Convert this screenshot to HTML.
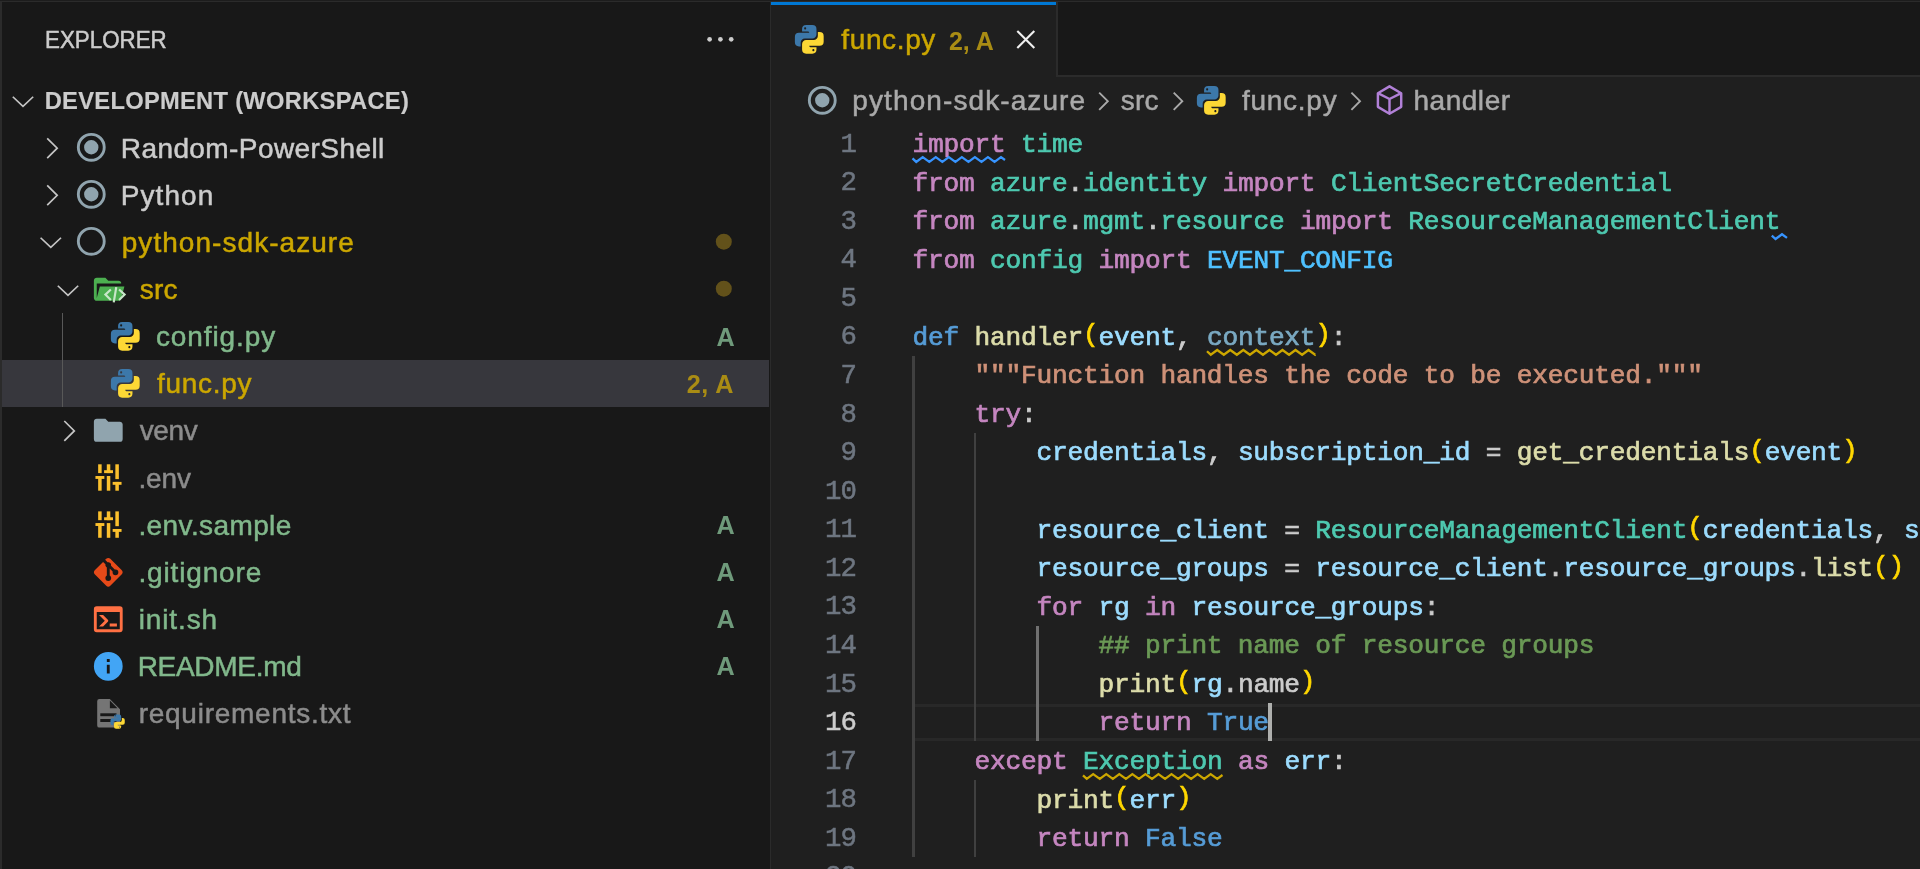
<!DOCTYPE html>
<html><head><meta charset="utf-8"><title>func.py - Visual Studio Code</title><style>
html,body{margin:0;padding:0;background:#181818;}
body{width:1920px;height:869px;overflow:hidden;position:relative;}
#r{position:absolute;left:0;top:0;width:1920px;height:869px;overflow:hidden;will-change:transform;transform:translateZ(0);}
#r>div,#r>span,#r>svg{position:absolute;display:block;}
#r>span{white-space:pre;}
#r>svg{overflow:visible;}
.s{font-family:"Liberation Sans", sans-serif;line-height:40px;-webkit-text-stroke:0.5px;}
.m{font:26.2px/38.56px "Liberation Mono", monospace;letter-spacing:-0.2226px;-webkit-text-stroke:0.7px;}
.m.n{font-size:27.4px;letter-spacing:-0.9427px;-webkit-text-stroke:0.5px;}
.m i{font-style:normal;}
.m .b{color:#ffd700;position:relative;top:-2.6px;}
</style></head>
<body><div id="r">
<div style="left:0.00px;top:0.00px;width:1920.00px;height:869.00px;background:#181818;"></div>
<div style="left:771.00px;top:77.00px;width:1149.00px;height:792.00px;background:#1f1f1f;"></div>
<div style="left:0.00px;top:0.00px;width:1920.00px;height:1.00px;background:#1d1d1d;"></div>
<div style="left:0.00px;top:1.00px;width:1920.00px;height:1.00px;background:#2b2b2b;"></div>
<div style="left:0.00px;top:1.00px;width:2.00px;height:868.00px;background:#2b2b2b;"></div>
<div style="left:770.00px;top:2.00px;width:1.00px;height:867.00px;background:#2b2b2b;"></div>
<div style="left:771.00px;top:75.00px;width:1149.00px;height:2.00px;background:#2b2b2b;"></div>
<div style="left:771.00px;top:2.00px;width:285.00px;height:75.00px;background:#1f1f1f;"></div>
<div style="left:771.00px;top:2.00px;width:285.00px;height:2.50px;background:#0078d4;"></div>
<div style="left:1056.00px;top:2.00px;width:1.50px;height:74.00px;background:#2b2b2b;"></div>
<div style="left:2.00px;top:359.72px;width:767.00px;height:47.08px;background:#37373d;"></div>
<svg style="left:710px;top:229px" width="28" height="24" viewBox="710 229 28 24"><circle cx="723.8" cy="241.7" r="8" fill="#62511a"/></svg>
<svg style="left:710px;top:276px" width="28" height="24" viewBox="710 276 28 24"><circle cx="723.8" cy="288.7" r="8" fill="#62511a"/></svg>
<div style="left:62.00px;top:312.50px;width:1.00px;height:94.40px;background:#585858;"></div>
<span class="s" style="transform:scaleX(0.9432);transform-origin:0 0;left:44.91px;top:20.38px;font-size:23.7px;font-weight:normal;letter-spacing:0.000px;-webkit-text-stroke-width:0.5px;color:#cccccc">EXPLORER</span>
<span class="s" style="left:44.68px;top:81.18px;font-size:23.7px;font-weight:bold;letter-spacing:0.301px;-webkit-text-stroke-width:0.15px;color:#cccccc">DEVELOPMENT (WORKSPACE)</span>
<span class="s" style="left:120.75px;top:128.94px;font-size:28.0px;font-weight:normal;letter-spacing:0.421px;-webkit-text-stroke-width:0.5px;color:#cccccc">Random-PowerShell</span>
<span class="s" style="left:120.75px;top:176.03px;font-size:28.0px;font-weight:normal;letter-spacing:1.080px;-webkit-text-stroke-width:0.5px;color:#cccccc">Python</span>
<span class="s" style="left:121.75px;top:223.11px;font-size:28.0px;font-weight:normal;letter-spacing:1.049px;-webkit-text-stroke-width:0.5px;color:#cca700">python-sdk-azure</span>
<span class="s" style="left:139.85px;top:270.19px;font-size:28.0px;font-weight:normal;letter-spacing:0.138px;-webkit-text-stroke-width:0.5px;color:#cca700">src</span>
<span class="s" style="left:155.95px;top:317.28px;font-size:28.0px;font-weight:normal;letter-spacing:0.891px;-webkit-text-stroke-width:0.5px;color:#81b88b">config.py</span>
<span class="s" style="left:156.95px;top:364.36px;font-size:28.0px;font-weight:normal;letter-spacing:0.704px;-webkit-text-stroke-width:0.5px;color:#cca700">func.py</span>
<span class="s" style="left:139.75px;top:411.45px;font-size:28.0px;font-weight:normal;letter-spacing:-0.415px;-webkit-text-stroke-width:0.5px;color:#8c8c8c">venv</span>
<span class="s" style="left:138.45px;top:458.53px;font-size:28.0px;font-weight:normal;letter-spacing:-0.108px;-webkit-text-stroke-width:0.5px;color:#8c8c8c">.env</span>
<span class="s" style="left:138.45px;top:505.61px;font-size:28.0px;font-weight:normal;letter-spacing:0.399px;-webkit-text-stroke-width:0.5px;color:#81b88b">.env.sample</span>
<span class="s" style="left:138.45px;top:552.70px;font-size:28.0px;font-weight:normal;letter-spacing:0.843px;-webkit-text-stroke-width:0.5px;color:#81b88b">.gitignore</span>
<span class="s" style="left:138.65px;top:599.78px;font-size:28.0px;font-weight:normal;letter-spacing:0.888px;-webkit-text-stroke-width:0.5px;color:#81b88b">init.sh</span>
<span class="s" style="left:137.65px;top:646.87px;font-size:28.0px;font-weight:normal;letter-spacing:-0.287px;-webkit-text-stroke-width:0.5px;color:#81b88b">README.md</span>
<span class="s" style="left:138.65px;top:693.95px;font-size:28.0px;font-weight:normal;letter-spacing:0.749px;-webkit-text-stroke-width:0.5px;color:#8c8c8c">requirements.txt</span>
<span class="s" style="left:716.60px;top:316.65px;font-size:25.2px;font-weight:bold;letter-spacing:0.000px;-webkit-text-stroke-width:0px;color:#6f9a7b">A</span>
<span class="s" style="left:716.60px;top:504.99px;font-size:25.2px;font-weight:bold;letter-spacing:0.000px;-webkit-text-stroke-width:0px;color:#6f9a7b">A</span>
<span class="s" style="left:716.60px;top:552.07px;font-size:25.2px;font-weight:bold;letter-spacing:0.000px;-webkit-text-stroke-width:0px;color:#6f9a7b">A</span>
<span class="s" style="left:716.60px;top:599.15px;font-size:25.2px;font-weight:bold;letter-spacing:0.000px;-webkit-text-stroke-width:0px;color:#6f9a7b">A</span>
<span class="s" style="left:716.60px;top:646.24px;font-size:25.2px;font-weight:bold;letter-spacing:0.000px;-webkit-text-stroke-width:0px;color:#6f9a7b">A</span>
<span class="s" style="left:686.70px;top:363.73px;font-size:25.2px;font-weight:bold;letter-spacing:0.499px;-webkit-text-stroke-width:0px;color:#a98c14">2, A</span>
<span class="s" style="left:841.25px;top:20.19px;font-size:28.0px;font-weight:normal;letter-spacing:0.637px;-webkit-text-stroke-width:0.5px;color:#cca700">func.py</span>
<span class="s" style="transform:scaleX(0.9591);transform-origin:0 0;left:948.75px;top:20.99px;font-size:26.0px;font-weight:bold;letter-spacing:0.000px;-webkit-text-stroke-width:0px;color:#a98c14">2, A</span>
<span class="s" style="left:852.35px;top:80.89px;font-size:28.0px;font-weight:normal;letter-spacing:1.096px;-webkit-text-stroke-width:0.5px;color:#a9a9a9">python-sdk-azure</span>
<span class="s" style="left:1120.85px;top:80.89px;font-size:28.0px;font-weight:normal;letter-spacing:0.163px;-webkit-text-stroke-width:0.5px;color:#a9a9a9">src</span>
<span class="s" style="left:1241.95px;top:80.89px;font-size:28.0px;font-weight:normal;letter-spacing:0.737px;-webkit-text-stroke-width:0.5px;color:#a9a9a9">func.py</span>
<span class="s" style="left:1413.45px;top:80.89px;font-size:28.0px;font-weight:normal;letter-spacing:0.536px;-webkit-text-stroke-width:0.5px;color:#a9a9a9">handler</span>
<svg style="left:7px;top:85px" width="32" height="32" viewBox="7 85 32 32"><path d="M12.80 96.75L23.00 106.45L33.20 96.75" fill="none" stroke="#c5c5c5" stroke-width="1.7" stroke-linejoin="miter"/></svg>
<svg style="left:700px;top:30px" width="40" height="20" viewBox="700 30 40 20"><circle cx="709.6" cy="39.35" r="2.35" fill="#cccccc"/><circle cx="720.4" cy="39.35" r="2.35" fill="#cccccc"/><circle cx="731.2" cy="39.35" r="2.35" fill="#cccccc"/></svg>
<svg style="left:36px;top:132px" width="32" height="32" viewBox="36 132 32 32"><path d="M47.20 138.30L57.20 148.20L47.20 158.10" fill="none" stroke="#c5c5c5" stroke-width="1.7" stroke-linejoin="miter"/></svg>
<svg style="left:36px;top:179px" width="32" height="32" viewBox="36 179 32 32"><path d="M47.20 185.38L57.20 195.28L47.20 205.18" fill="none" stroke="#c5c5c5" stroke-width="1.7" stroke-linejoin="miter"/></svg>
<svg style="left:34px;top:226px" width="32" height="32" viewBox="34 226 32 32"><path d="M40.60 237.75L50.80 247.45L61.00 237.75" fill="none" stroke="#c5c5c5" stroke-width="1.7" stroke-linejoin="miter"/></svg>
<svg style="left:52px;top:274px" width="32" height="32" viewBox="52 274 32 32"><path d="M57.80 285.75L68.00 295.45L78.20 285.75" fill="none" stroke="#c5c5c5" stroke-width="1.7" stroke-linejoin="miter"/></svg>
<svg style="left:53px;top:414px" width="32" height="32" viewBox="53 414 32 32"><path d="M64.30 421.00L74.30 430.90L64.30 440.80" fill="none" stroke="#c5c5c5" stroke-width="1.7" stroke-linejoin="miter"/></svg>
<svg style="left:74.12px;top:130.11px" width="34.56" height="34.56" viewBox="0 0 24 24"><path fill="#90a4ae" d="M12 2A10 10 0 0 0 2 12a10 10 0 0 0 10 10 10 10 0 0 0 10-10A10 10 0 0 0 12 2m0 2a8 8 0 0 1 8 8 8 8 0 0 1-8 8 8 8 0 0 1-8-8 8 8 0 0 1 8-8m0 3a5 5 0 0 0-5 5 5 5 0 0 0 5 5 5 5 0 0 0 5-5 5 5 0 0 0-5-5z"/></svg>
<svg style="left:74.12px;top:177.40px" width="34.56" height="34.56" viewBox="0 0 24 24"><path fill="#90a4ae" d="M12 2A10 10 0 0 0 2 12a10 10 0 0 0 10 10 10 10 0 0 0 10-10A10 10 0 0 0 12 2m0 2a8 8 0 0 1 8 8 8 8 0 0 1-8 8 8 8 0 0 1-8-8 8 8 0 0 1 8-8m0 3a5 5 0 0 0-5 5 5 5 0 0 0 5 5 5 5 0 0 0 5-5 5 5 0 0 0-5-5z"/></svg>
<svg style="left:74.12px;top:224.28px" width="34.56" height="34.56" viewBox="0 0 24 24"><path fill="#90a4ae" d="M12 2A10 10 0 0 0 2 12a10 10 0 0 0 10 10 10 10 0 0 0 10-10A10 10 0 0 0 12 2m0 2a8 8 0 0 1 8 8 8 8 0 0 1-8 8 8 8 0 0 1-8-8 8 8 0 0 1 8-8z"/></svg>
<svg style="left:91.22px;top:272.14px" width="34.56" height="34.56" viewBox="0 0 24 24"><path fill="#4caf50" d="M19 20H4c-1.11 0-2-.9-2-2V6c0-1.11.89-2 2-2h6l2 2h7a2 2 0 0 1 2 2H4v10l2.14-8h17.07l-2.28 8.5c-.23.87-1.01 1.5-1.93 1.5z"/><g fill="none" stroke="#c8e6c9" stroke-width="1.5" stroke-linejoin="miter"><path d="M13.8 12.2L10.0 15.7L13.8 19.45"/><path d="M17.55 10.5L15.8 21.1"/><path d="M19.5 12.2L23.35 15.7L19.5 19.45"/></g></svg>
<svg style="left:108.32px;top:319.02px" width="34.56" height="34.56" viewBox="0 0 24 24"><path fill="#3c78aa" d="M9.86 2A2.86 2.86 0 0 0 7 4.86v1.68h4.29c.39 0 .71.57.71.96H4.86A2.86 2.86 0 0 0 2 10.36v3.78A2.86 2.86 0 0 0 4.86 17h1.18v-2.68a2.85 2.85 0 0 1 2.85-2.86h5.25A2.85 2.85 0 0 0 17 8.61V4.86A2.86 2.86 0 0 0 14.14 2zm-.72 1.61c.4 0 .72.12.72.71s-.32.89-.72.89c-.39 0-.71-.3-.71-.89s.32-.71.71-.71z"/><path fill="#fdd835" d="M17.96 7v2.68a2.85 2.85 0 0 1-2.85 2.86H9.86A2.85 2.85 0 0 0 7 15.39v3.75A2.86 2.86 0 0 0 9.86 22h4.28A2.86 2.86 0 0 0 17 19.14v-1.68h-4.29c-.39 0-.71-.57-.71-.96h7.14A2.86 2.86 0 0 0 22 13.64V9.86A2.86 2.86 0 0 0 19.14 7zm-3.1 11.79c.39 0 .71.3.71.89a.71.71 0 0 1-.71.71c-.4 0-.72-.12-.72-.71s.32-.89.72-.89z"/></svg>
<svg style="left:108.32px;top:366.10px" width="34.56" height="34.56" viewBox="0 0 24 24"><path fill="#3c78aa" d="M9.86 2A2.86 2.86 0 0 0 7 4.86v1.68h4.29c.39 0 .71.57.71.96H4.86A2.86 2.86 0 0 0 2 10.36v3.78A2.86 2.86 0 0 0 4.86 17h1.18v-2.68a2.85 2.85 0 0 1 2.85-2.86h5.25A2.85 2.85 0 0 0 17 8.61V4.86A2.86 2.86 0 0 0 14.14 2zm-.72 1.61c.4 0 .72.12.72.71s-.32.89-.72.89c-.39 0-.71-.3-.71-.89s.32-.71.71-.71z"/><path fill="#fdd835" d="M17.96 7v2.68a2.85 2.85 0 0 1-2.85 2.86H9.86A2.85 2.85 0 0 0 7 15.39v3.75A2.86 2.86 0 0 0 9.86 22h4.28A2.86 2.86 0 0 0 17 19.14v-1.68h-4.29c-.39 0-.71-.57-.71-.96h7.14A2.86 2.86 0 0 0 22 13.64V9.86A2.86 2.86 0 0 0 19.14 7zm-3.1 11.79c.39 0 .71.3.71.89a.71.71 0 0 1-.71.71c-.4 0-.72-.12-.72-.71s.32-.89.72-.89z"/></svg>
<svg style="left:91.27px;top:413.44px" width="34.56" height="34.56" viewBox="0 0 24 24"><path fill="#90a4ae" d="M10 4H4c-1.11 0-2 .89-2 2v12a2 2 0 0 0 2 2h16a2 2 0 0 0 2-2V8c0-1.11-.9-2-2-2h-8l-2-2z"/></svg>
<svg style="left:90px;top:459px" width="36" height="36" viewBox="90 459 36 36"><g fill="#fbc02d"><rect x="98.15" y="464.30" width="3.50" height="8.80"/><rect x="98.15" y="476.00" width="3.50" height="14.70"/><rect x="95.45" y="476.00" width="8.90" height="2.90"/><rect x="106.80" y="464.30" width="3.50" height="8.80"/><rect x="106.80" y="476.00" width="3.50" height="14.70"/><rect x="104.10" y="470.20" width="8.90" height="2.90"/><rect x="115.35" y="464.30" width="3.50" height="14.80"/><rect x="115.35" y="481.90" width="3.50" height="8.80"/><rect x="112.65" y="481.90" width="8.90" height="2.90"/></g></svg>
<svg style="left:90px;top:506px" width="36" height="36" viewBox="90 506 36 36"><g fill="#fbc02d"><rect x="98.15" y="511.38" width="3.50" height="8.80"/><rect x="98.15" y="523.08" width="3.50" height="14.70"/><rect x="95.45" y="523.08" width="8.90" height="2.90"/><rect x="106.80" y="511.38" width="3.50" height="8.80"/><rect x="106.80" y="523.08" width="3.50" height="14.70"/><rect x="104.10" y="517.28" width="8.90" height="2.90"/><rect x="115.35" y="511.38" width="3.50" height="14.80"/><rect x="115.35" y="528.98" width="3.50" height="8.80"/><rect x="112.65" y="528.98" width="8.90" height="2.90"/></g></svg>
<svg style="left:91.42px;top:554.92px" width="34.56" height="34.56" viewBox="0 0 24 24"><path fill="#e64a19" d="M2.6 10.59 8.38 4.8l1.69 1.7c-.24.85.15 1.78.93 2.23v5.54c-.6.34-1 .99-1 1.73a2 2 0 0 0 2 2 2 2 0 0 0 2-2c0-.74-.4-1.39-1-1.73V9.41l2.07 2.09c-.07.15-.07.32-.07.5a2 2 0 0 0 2 2 2 2 0 0 0 2-2 2 2 0 0 0-2-2c-.18 0-.35 0-.5.07L13.93 7.5a1.98 1.98 0 0 0-1.15-2.34c-.43-.16-.88-.2-1.28-.09L9.8 3.38l.79-.78c.78-.79 2.04-.79 2.82 0l7.99 7.99c.79.78.79 2.04 0 2.82l-7.99 7.99c-.78.79-2.04.79-2.82 0L2.6 13.41c-.79-.78-.79-2.04 0-2.82z"/></svg>
<svg style="left:91.42px;top:601.57px" width="34.56" height="34.56" viewBox="0 0 24 24"><path fill="#ff7043" d="M20 19V7H4v12h16m0-16a2 2 0 0 1 2 2v14a2 2 0 0 1-2 2H4a2 2 0 0 1-2-2V5a2 2 0 0 1 2-2h16m-7 14v-2h5v2h-5m-3.42-4L5.57 9H8.4l3.3 3.3c.39.39.39 1.03 0 1.42L8.42 17H5.59l4-4z"/></svg>
<svg style="left:91.42px;top:648.52px" width="34.56" height="34.56" viewBox="0 0 24 24"><path fill="#42a5f5" d="M13 9h-2V7h2m0 10h-2v-6h2m-1-9A10 10 0 0 0 2 12a10 10 0 0 0 10 10 10 10 0 0 0 10-10A10 10 0 0 0 12 2z"/></svg>
<svg style="left:92px;top:695px" width="36" height="38" viewBox="92 695 36 38"><path fill="#757575" d="M99.4 699H109.8L120 709.2V725.4a2.2 2.2 0 0 1-2.2 2.2H99.4a2.2 2.2 0 0 1-2.2-2.2V701.2a2.2 2.2 0 0 1 2.2-2.2z"/><path fill="#181818" d="M109.9 700.6V708.2H117.5z"/><rect x="100.3" y="713.3" width="16.2" height="2.9" fill="#181818"/><rect x="100.3" y="719.0" width="16.2" height="3.0" fill="#181818"/></svg>
<svg style="left:108.55px;top:713.35px" width="17.20" height="17.20" viewBox="0 0 24 24"><path fill="#3c78aa" d="M9.86 2A2.86 2.86 0 0 0 7 4.86v1.68h4.29c.39 0 .71.57.71.96H4.86A2.86 2.86 0 0 0 2 10.36v3.78A2.86 2.86 0 0 0 4.86 17h1.18v-2.68a2.85 2.85 0 0 1 2.85-2.86h5.25A2.85 2.85 0 0 0 17 8.61V4.86A2.86 2.86 0 0 0 14.14 2zm-.72 1.61c.4 0 .72.12.72.71s-.32.89-.72.89c-.39 0-.71-.3-.71-.89s.32-.71.71-.71z"/><path fill="#fdd835" d="M17.96 7v2.68a2.85 2.85 0 0 1-2.85 2.86H9.86A2.85 2.85 0 0 0 7 15.39v3.75A2.86 2.86 0 0 0 9.86 22h4.28A2.86 2.86 0 0 0 17 19.14v-1.68h-4.29c-.39 0-.71-.57-.71-.96h7.14A2.86 2.86 0 0 0 22 13.64V9.86A2.86 2.86 0 0 0 19.14 7zm-3.1 11.79c.39 0 .71.3.71.89a.71.71 0 0 1-.71.71c-.4 0-.72-.12-.72-.71s.32-.89.72-.89z"/></svg>
<svg style="left:792.22px;top:21.82px" width="34.56" height="34.56" viewBox="0 0 24 24"><path fill="#3c78aa" d="M9.86 2A2.86 2.86 0 0 0 7 4.86v1.68h4.29c.39 0 .71.57.71.96H4.86A2.86 2.86 0 0 0 2 10.36v3.78A2.86 2.86 0 0 0 4.86 17h1.18v-2.68a2.85 2.85 0 0 1 2.85-2.86h5.25A2.85 2.85 0 0 0 17 8.61V4.86A2.86 2.86 0 0 0 14.14 2zm-.72 1.61c.4 0 .72.12.72.71s-.32.89-.72.89c-.39 0-.71-.3-.71-.89s.32-.71.71-.71z"/><path fill="#fdd835" d="M17.96 7v2.68a2.85 2.85 0 0 1-2.85 2.86H9.86A2.85 2.85 0 0 0 7 15.39v3.75A2.86 2.86 0 0 0 9.86 22h4.28A2.86 2.86 0 0 0 17 19.14v-1.68h-4.29c-.39 0-.71-.57-.71-.96h7.14A2.86 2.86 0 0 0 22 13.64V9.86A2.86 2.86 0 0 0 19.14 7zm-3.1 11.79c.39 0 .71.3.71.89a.71.71 0 0 1-.71.71c-.4 0-.72-.12-.72-.71s.32-.89.72-.89z"/></svg>
<svg style="left:1010px;top:24px" width="32" height="32" viewBox="1010 24 32 32"><path d="M1017.3 31.0L1034.3 48.0M1034.3 31.0L1017.3 48.0" stroke="#f0f0f0" stroke-width="2.1" fill="none"/></svg>
<svg style="left:805.02px;top:82.92px" width="34.56" height="34.56" viewBox="0 0 24 24"><path fill="#90a4ae" d="M12 2A10 10 0 0 0 2 12a10 10 0 0 0 10 10 10 10 0 0 0 10-10A10 10 0 0 0 12 2m0 2a8 8 0 0 1 8 8 8 8 0 0 1-8 8 8 8 0 0 1-8-8 8 8 0 0 1 8-8m0 3a5 5 0 0 0-5 5 5 5 0 0 0 5 5 5 5 0 0 0 5-5 5 5 0 0 0-5-5z"/></svg>
<svg style="left:1087px;top:85px" width="32" height="32" viewBox="1087 85 32 32"><path d="M1099.20 92.60L1107.80 101.20L1099.20 109.80" fill="none" stroke="#a9a9a9" stroke-width="1.9" stroke-linejoin="miter"/></svg>
<svg style="left:1162px;top:85px" width="32" height="32" viewBox="1162 85 32 32"><path d="M1173.70 92.60L1182.30 101.20L1173.70 109.80" fill="none" stroke="#a9a9a9" stroke-width="1.9" stroke-linejoin="miter"/></svg>
<svg style="left:1339px;top:85px" width="32" height="32" viewBox="1339 85 32 32"><path d="M1351.40 92.60L1360.00 101.20L1351.40 109.80" fill="none" stroke="#a9a9a9" stroke-width="1.9" stroke-linejoin="miter"/></svg>
<svg style="left:1193.52px;top:83.22px" width="34.56" height="34.56" viewBox="0 0 24 24"><path fill="#3c78aa" d="M9.86 2A2.86 2.86 0 0 0 7 4.86v1.68h4.29c.39 0 .71.57.71.96H4.86A2.86 2.86 0 0 0 2 10.36v3.78A2.86 2.86 0 0 0 4.86 17h1.18v-2.68a2.85 2.85 0 0 1 2.85-2.86h5.25A2.85 2.85 0 0 0 17 8.61V4.86A2.86 2.86 0 0 0 14.14 2zm-.72 1.61c.4 0 .72.12.72.71s-.32.89-.72.89c-.39 0-.71-.3-.71-.89s.32-.71.71-.71z"/><path fill="#fdd835" d="M17.96 7v2.68a2.85 2.85 0 0 1-2.85 2.86H9.86A2.85 2.85 0 0 0 7 15.39v3.75A2.86 2.86 0 0 0 9.86 22h4.28A2.86 2.86 0 0 0 17 19.14v-1.68h-4.29c-.39 0-.71-.57-.71-.96h7.14A2.86 2.86 0 0 0 22 13.64V9.86A2.86 2.86 0 0 0 19.14 7zm-3.1 11.79c.39 0 .71.3.71.89a.71.71 0 0 1-.71.71c-.4 0-.72-.12-.72-.71s.32-.89.72-.89z"/></svg>
<svg style="left:1372px;top:80px" width="36" height="40" viewBox="1372 80 36 40"><g fill="none" stroke="#b180d7" stroke-width="2.45" stroke-linejoin="round"><path d="M1389.5 86.35L1401.2 93.2V106.85L1389.5 113.7L1377.9 106.85V93.2z"/><path d="M1377.9 93.2L1389.5 99.0L1401.2 93.2M1389.5 99.0V113.7"/></g></svg>
<div style="left:913.00px;top:703.50px;width:1007.00px;height:3.20px;background:#282828;"></div>
<div style="left:913.00px;top:737.50px;width:1007.00px;height:3.20px;background:#282828;"></div>
<div style="left:912.40px;top:355.96px;width:2.20px;height:501.28px;background:#404040;"></div>
<div style="left:974.00px;top:433.08px;width:2.20px;height:307.98px;background:#404040;"></div>
<div style="left:974.00px;top:780.12px;width:2.20px;height:77.12px;background:#404040;"></div>
<div style="left:1036.40px;top:625.88px;width:2.20px;height:115.18px;background:#707070;"></div>
<span class="m n" style="left:809.50px;width:46.50px;text-align:right;top:125.68px;color:#6e7681">1</span>
<span class="m" style="left:912.50px;top:126.00px;color:#cccccc"><i style="color:#c586c0">import</i> <i style="color:#4ec9b0">time</i></span>
<span class="m n" style="left:809.50px;width:46.50px;text-align:right;top:164.24px;color:#6e7681">2</span>
<span class="m" style="left:912.50px;top:164.56px;color:#cccccc"><i style="color:#c586c0">from</i> <i style="color:#4ec9b0">azure</i>.<i style="color:#4ec9b0">identity</i> <i style="color:#c586c0">import</i> <i style="color:#4ec9b0">ClientSecretCredential</i></span>
<span class="m n" style="left:809.50px;width:46.50px;text-align:right;top:202.80px;color:#6e7681">3</span>
<span class="m" style="left:912.50px;top:203.12px;color:#cccccc"><i style="color:#c586c0">from</i> <i style="color:#4ec9b0">azure</i>.<i style="color:#4ec9b0">mgmt</i>.<i style="color:#4ec9b0">resource</i> <i style="color:#c586c0">import</i> <i style="color:#4ec9b0">ResourceManagementClient</i></span>
<span class="m n" style="left:809.50px;width:46.50px;text-align:right;top:241.36px;color:#6e7681">4</span>
<span class="m" style="left:912.50px;top:241.68px;color:#cccccc"><i style="color:#c586c0">from</i> <i style="color:#4ec9b0">config</i> <i style="color:#c586c0">import</i> <i style="color:#4fc1ff">EVENT_CONFIG</i></span>
<span class="m n" style="left:809.50px;width:46.50px;text-align:right;top:279.92px;color:#6e7681">5</span>
<span class="m n" style="left:809.50px;width:46.50px;text-align:right;top:318.48px;color:#6e7681">6</span>
<span class="m" style="left:912.50px;top:318.80px;color:#cccccc"><i style="color:#569cd6">def</i> <i style="color:#dcdcaa">handler</i><i class="b">(</i><i style="color:#9cdcfe">event</i>, <i style="color:#7aa9c2">context</i><i class="b">)</i>:</span>
<span class="m n" style="left:809.50px;width:46.50px;text-align:right;top:357.04px;color:#6e7681">7</span>
<span class="m" style="left:912.50px;top:357.36px;color:#cccccc">    <i style="color:#ce9178">&quot;&quot;&quot;Function handles the code to be executed.&quot;&quot;&quot;</i></span>
<span class="m n" style="left:809.50px;width:46.50px;text-align:right;top:395.60px;color:#6e7681">8</span>
<span class="m" style="left:912.50px;top:395.92px;color:#cccccc">    <i style="color:#c586c0">try</i>:</span>
<span class="m n" style="left:809.50px;width:46.50px;text-align:right;top:434.16px;color:#6e7681">9</span>
<span class="m" style="left:912.50px;top:434.48px;color:#cccccc">        <i style="color:#9cdcfe">credentials</i>, <i style="color:#9cdcfe">subscription_id</i> = <i style="color:#dcdcaa">get_credentials</i><i class="b">(</i><i style="color:#9cdcfe">event</i><i class="b">)</i></span>
<span class="m n" style="left:809.50px;width:46.50px;text-align:right;top:472.72px;color:#6e7681">10</span>
<span class="m n" style="left:809.50px;width:46.50px;text-align:right;top:511.28px;color:#6e7681">11</span>
<span class="m" style="left:912.50px;top:511.60px;color:#cccccc">        <i style="color:#9cdcfe">resource_client</i> = <i style="color:#4ec9b0">ResourceManagementClient</i><i class="b">(</i><i style="color:#9cdcfe">credentials</i>, <i style="color:#9cdcfe">subscription_id</i><i class="b">)</i></span>
<span class="m n" style="left:809.50px;width:46.50px;text-align:right;top:549.84px;color:#6e7681">12</span>
<span class="m" style="left:912.50px;top:550.16px;color:#cccccc">        <i style="color:#9cdcfe">resource_groups</i> = <i style="color:#9cdcfe">resource_client</i>.<i style="color:#9cdcfe">resource_groups</i>.<i style="color:#dcdcaa">list</i><i class="b">()</i></span>
<span class="m n" style="left:809.50px;width:46.50px;text-align:right;top:588.40px;color:#6e7681">13</span>
<span class="m" style="left:912.50px;top:588.72px;color:#cccccc">        <i style="color:#c586c0">for</i> <i style="color:#9cdcfe">rg</i> <i style="color:#c586c0">in</i> <i style="color:#9cdcfe">resource_groups</i>:</span>
<span class="m n" style="left:809.50px;width:46.50px;text-align:right;top:626.96px;color:#6e7681">14</span>
<span class="m" style="left:912.50px;top:627.28px;color:#cccccc">            <i style="color:#6a9955">## print name of resource groups</i></span>
<span class="m n" style="left:809.50px;width:46.50px;text-align:right;top:665.52px;color:#6e7681">15</span>
<span class="m" style="left:912.50px;top:665.84px;color:#cccccc">            <i style="color:#dcdcaa">print</i><i class="b">(</i><i style="color:#9cdcfe">rg</i>.name<i class="b">)</i></span>
<span class="m n" style="left:809.50px;width:46.50px;text-align:right;top:704.08px;color:#cccccc">16</span>
<span class="m" style="left:912.50px;top:704.40px;color:#cccccc">            <i style="color:#c586c0">return</i> <i style="color:#569cd6">True</i></span>
<span class="m n" style="left:809.50px;width:46.50px;text-align:right;top:742.64px;color:#6e7681">17</span>
<span class="m" style="left:912.50px;top:742.96px;color:#cccccc">    <i style="color:#c586c0">except</i> <i style="color:#4ec9b0">Exception</i> <i style="color:#c586c0">as</i> <i style="color:#9cdcfe">err</i>:</span>
<span class="m n" style="left:809.50px;width:46.50px;text-align:right;top:781.20px;color:#6e7681">18</span>
<span class="m" style="left:912.50px;top:781.52px;color:#cccccc">        <i style="color:#dcdcaa">print</i><i class="b">(</i><i style="color:#9cdcfe">err</i><i class="b">)</i></span>
<span class="m n" style="left:809.50px;width:46.50px;text-align:right;top:819.76px;color:#6e7681">19</span>
<span class="m" style="left:912.50px;top:820.08px;color:#cccccc">        <i style="color:#c586c0">return</i> <i style="color:#569cd6">False</i></span>
<span class="m n" style="left:809.50px;width:46.50px;text-align:right;top:858.32px;color:#6e7681">20</span>
<div style="left:1268.00px;top:703.00px;width:4.00px;height:38.00px;background:#aeafad;"></div>
<svg style="left:909px;top:153px" width="100" height="12" viewBox="909 153 100 12"><path d="M912.50 158.46L916.25 161.91L922.70 157.16L929.30 161.91L935.75 157.16L942.35 161.91L948.80 157.16L955.40 161.91L961.85 157.16L968.45 161.91L974.90 157.16L981.50 161.91L987.95 157.16L994.55 161.91L1001.00 157.16L1005.00 160.04" fill="none" stroke="#3794ff" stroke-width="2.3" stroke-linejoin="miter"/></svg>
<svg style="left:1768px;top:230px" width="23" height="13" viewBox="1768 230 23 13"><path d="M1771.80 235.58L1775.55 239.03L1782.00 234.28L1787.00 237.88" fill="none" stroke="#3794ff" stroke-width="2.3" stroke-linejoin="miter"/></svg>
<svg style="left:1204px;top:345px" width="115" height="13" viewBox="1204 345 115 13"><path d="M1207.00 351.26L1210.75 354.71L1217.20 349.96L1223.80 354.71L1230.25 349.96L1236.85 354.71L1243.30 349.96L1249.90 354.71L1256.35 349.96L1262.95 354.71L1269.40 349.96L1276.00 354.71L1282.45 349.96L1289.05 354.71L1295.50 349.96L1302.10 354.71L1308.55 349.96L1315.15 354.71L1315.50 354.45" fill="none" stroke="#cca700" stroke-width="2.3" stroke-linejoin="miter"/></svg>
<svg style="left:1080px;top:770px" width="146" height="12" viewBox="1080 770 146 12"><path d="M1083.00 775.42L1086.75 778.87L1093.20 774.12L1099.80 778.87L1106.25 774.12L1112.85 778.87L1119.30 774.12L1125.90 778.87L1132.35 774.12L1138.95 778.87L1145.40 774.12L1152.00 778.87L1158.45 774.12L1165.05 778.87L1171.50 774.12L1178.10 778.87L1184.55 774.12L1191.15 778.87L1197.60 774.12L1204.20 778.87L1210.65 774.12L1217.25 778.87L1222.50 775.00" fill="none" stroke="#cca700" stroke-width="2.3" stroke-linejoin="miter"/></svg>
</div></body></html>
